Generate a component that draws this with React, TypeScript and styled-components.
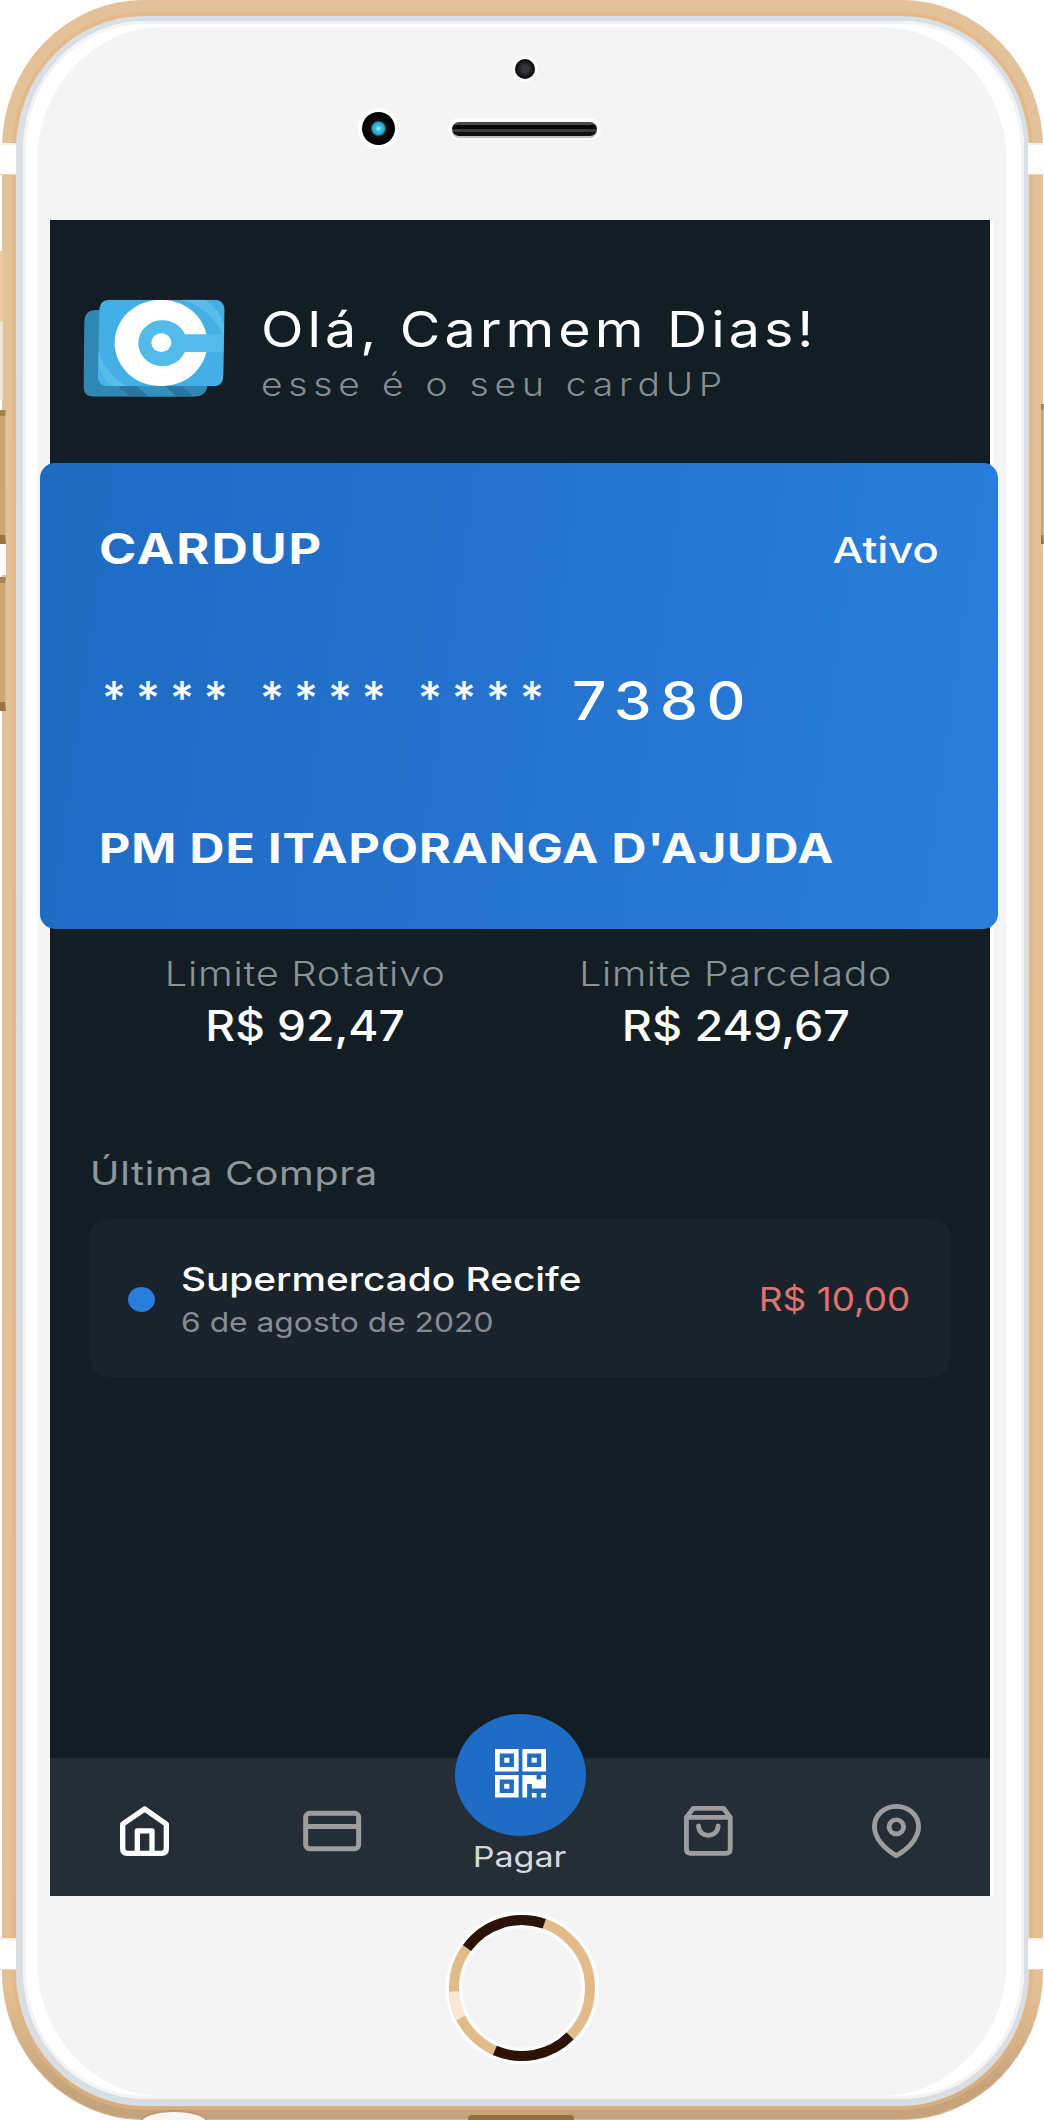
import React from "react";
import styled, { createGlobalStyle } from "styled-components";

const GlobalStyle = createGlobalStyle`
  * { box-sizing: border-box; }
  body { margin: 0; background: #fff; }
`;

/* ---------- phone body ---------- */

const Phone = styled.div`
  position: relative;
  width: 1044px;
  height: 2120px;
  padding: 0 1px 0 2px;
  overflow: hidden;
  font-family: Inter, "Open Sans", "Liberation Sans", sans-serif;
`;

const GoldFrame = styled.div`
  height: 2120px;
  padding: 16px 14px 14px;
  border-radius: 142px / 148px;
  background: linear-gradient(180deg, #e3c29a 0, #e3bf94 1990px, #c5a37b 2090px);
  box-shadow: inset 0 0 0 1px rgba(226, 196, 158, 0.6);
`;

const Rim = styled.div`
  height: 2090px;
  padding: 5px 5px 7px 7px;
  border-radius: 128px / 134px;
  background: linear-gradient(180deg, #d8e0e7, #dadfe1 50%, #d9dee2);
  box-shadow: 0 0 0 4px rgba(229, 180, 130, 0.6);
`;

const Gloss = styled.div`
  height: 2078px;
  padding: 6px 17px 3px 14px;
  border-radius: 122px / 128px;
  background: #fff;
  box-shadow: inset 0 0 0 3px #f3f3f4;
`;

const Plate = styled.div`
  display: flex;
  flex-direction: column;
  height: 2069px;
  padding-left: 13px;
  border-radius: 126px / 136px;
  background: #f4f4f4;
`;

const AntennaGap = styled.div<{ $side: "left" | "right"; $top: number }>`
  position: absolute;
  ${(p) => p.$side}: 0;
  top: ${(p) => p.$top}px;
  width: 16px;
  height: 32px;
  background: #fff;
  border-top: 2px solid #faeee2;
  border-bottom: 1px solid #efd2b0;
`;

const SideKey = styled.div<{ $side: "left" | "right"; $top: number; $height: number; $width: number }>`
  position: absolute;
  ${(p) => p.$side}: 0;
  top: ${(p) => p.$top}px;
  width: ${(p) => p.$width}px;
  height: ${(p) => p.$height}px;
  background: #cba673;
  border-top: 6px solid #a8824f;
  border-bottom: 9px solid #9a7443;
  border-right: 1px solid #d8b98f;
`;

const KeyGap = styled.div<{ $top: number; $height: number; $width: number; $tone: string }>`
  position: absolute;
  left: 0;
  top: ${(p) => p.$top}px;
  width: ${(p) => p.$width}px;
  height: ${(p) => p.$height}px;
  background: ${(p) => p.$tone};
`;

const Jack = styled.div`
  position: absolute;
  left: 142px;
  top: 2112px;
  width: 64px;
  height: 20px;
  border-radius: 50%;
  background: #f7f7f7;
  box-shadow: 0 0 0 2px #c19565;
`;

const Port = styled.div`
  position: absolute;
  left: 468px;
  top: 2115px;
  width: 106px;
  height: 6px;
  border-radius: 4px 4px 0 0;
  background: #94703f;
`;

/* ---------- bezel ---------- */

const TopBezel = styled.div`
  height: 193px;
  flex: none;
  padding: 32px 0 0 312px;
`;

const Sensor = styled.div`
  width: 20px;
  height: 20px;
  margin-left: 153px;
  border-radius: 50%;
  background: radial-gradient(#34343a 25%, #0c0c0f 65%);
  box-shadow: 0 0 0 3px #fcfcfc;
`;

const SpeakerRow = styled.div`
  display: flex;
  align-items: center;
  margin-top: 33px;
`;

const Camera = styled.div`
  width: 33px;
  height: 33px;
  margin-right: 57px;
  border-radius: 50%;
  background: radial-gradient(circle, #b8f2ff 0, #2fc2e6 3px, #27a5cc 6px, #180c0c 8px, #000 15px);
  box-shadow: 0 0 0 4px #fdfdfd;
`;

const Speaker = styled.div`
  width: 145px;
  height: 14px;
  border-radius: 7px;
  background: linear-gradient(180deg, #4a4a4a 0 3px, #080808 3px 7px, #3b3b3b 7px 10px, #111 10px);
  box-shadow: 0 2px 0 #c2c0c0, 0 0 0 4px #fdfdfd;
`;

const HomeButton = styled.svg`
  display: block;
  width: 160px;
  height: 160px;
  margin: 12px 0 0 392px;
`;

/* ---------- screen ---------- */

const Screen = styled.main`
  display: flex;
  flex-direction: column;
  flex: none;
  width: 940px;
  height: 1676px;
  background: #131e24;
  box-shadow: 3px 0 0 #fff;
`;

const Label = styled.span<{
  $size: number;
  $line: number;
  $weight?: number;
  $tone?: string;
  $spacing?: number;
  $stretch?: number;
  $origin?: string;
}>`
  display: block;
  white-space: pre;
  font-size: ${(p) => p.$size}px;
  line-height: ${(p) => p.$line}px;
  font-weight: ${(p) => p.$weight ?? 400};
  color: ${(p) => p.$tone ?? "#fff"};
  letter-spacing: ${(p) => p.$spacing ?? 0}px;
  transform: scaleX(${(p) => p.$stretch ?? 1});
  transform-origin: ${(p) => p.$origin ?? "left"} center;
`;

const Header = styled.header`
  display: flex;
  height: 243px;
  padding: 79px 0 0 33px;
`;

const Logo = styled.svg`
  flex: none;
  width: 142px;
  height: 98px;
  margin-right: 36px;
`;

const Greeting = styled.div`
  padding-top: 3px;
`;

const BankCard = styled.section`
  display: flex;
  flex-direction: column;
  flex: none;
  height: 466px;
  margin: 0 -8px 0 -10px;
  padding: 56px 59px 50px;
  border-radius: 15px;
  background: linear-gradient(98deg, #1e6bc2, #2473cf 50%, #2a7fdc);
`;

const CardTop = styled.div`
  display: flex;
  justify-content: space-between;
`;

const CardNumber = styled.div`
  display: flex;
  margin: 82px 0 79px 3px;
`;

const Mask = styled.div`
  width: 470px;
  padding-top: 5px;
`;

const Limits = styled.section`
  display: grid;
  grid-template-columns: 1fr 1fr;
  height: 219px;
  padding: 21px 39px 0 40px;
  flex: none;
`;

const Limit = styled.div`
  display: flex;
  flex-direction: column;
  align-items: center;
`;

const LastPurchase = styled.section`
  flex: 1;
  padding: 0 39px;
`;

const SectionTitle = styled.div`
  padding-left: 1px;
`;

const Tile = styled.article`
  display: flex;
  align-items: center;
  height: 158px;
  margin-top: 21px;
  padding: 3px 41px 0 39px;
  border-radius: 20px;
  background: #1a222b;
`;

const Dot = styled.i`
  width: 27px;
  height: 25px;
  margin-right: 26px;
  border-radius: 50%;
  background: #2a7edb;
`;

const Details = styled.div`
  flex: 1;
  padding-top: 3px;
`;

const TabBar = styled.nav`
  display: grid;
  grid-template-columns: repeat(5, 1fr);
  flex: none;
  height: 138px;
  background: #252e37;
`;

const Tab = styled.a`
  display: flex;
  align-items: center;
  justify-content: center;
  padding-top: 8px;
`;

const PayTab = styled.a`
  display: flex;
  flex-direction: column;
  align-items: center;
`;

const PayCircle = styled.div`
  display: flex;
  align-items: center;
  justify-content: center;
  width: 131px;
  height: 122px;
  margin-top: -44px;
  padding-bottom: 4px;
  border-radius: 50%;
  background: #1f6cc4;
`;

const Icon = styled.svg<{ $w: number; $h: number }>`
  display: block;
  width: ${(p) => p.$w}px;
  height: ${(p) => p.$h}px;
  overflow: visible;
  fill: none;
  stroke-linecap: round;
  stroke-linejoin: round;
`;

const LogoMark = () => (
  <Logo viewBox="130 266 426 294" preserveAspectRatio="none">
    <defs>
      <clipPath id="front">
        <path d="M212 268H522Q555 268 555 302L551 496Q551 528 518 528H208Q175 528 175 494L179 302Q179 268 212 268Z" />
      </clipPath>
      <clipPath id="back">
        <path d="M168 299H470Q504 299 504 334V526Q498 559 464 559H164Q131 559 131 526L134 334Q136 299 168 299Z" />
      </clipPath>
    </defs>
    <g clipPath="url(#back)">
      <rect x="131" y="299" width="380" height="262" fill="#3187b3" />
      <path d="M225 520H283L328 560H275ZM370 520H420L462 560H410Z" fill="#2b749d" />
      <path d="M283 520H370L410 560H328Z" fill="#3290bd" />
    </g>
    <g clipPath="url(#front)">
      <rect x="170" y="260" width="390" height="275" fill="#44afe5" />
      <path d="M176 422Q196 488 263 530H225Q176 515 176 460Z" fill="#58bdea" />
      <path d="M176 460Q185 510 225 530H170Z" fill="#47b2e7" />
      <path d="M420 266Q515 292 553 380V340Q538 294 491 266Z" fill="#58bdea" />
      <ellipse cx="364" cy="398" rx="139" ry="130" fill="#fff" />
      <path d="M551 372H436A73 69 0 1 0 436 425H551Z" fill="#54bae9" />
      <ellipse cx="365" cy="397" rx="30" ry="28" fill="#fff" />
    </g>
  </Logo>
);

const HomeIcon = () => (
  <Icon $w={49} $h={50} viewBox="238 348 147 149" preserveAspectRatio="none" stroke="#fff" strokeWidth="16">
    <path d="M312 357L246 402V475Q246 489 260 489H363Q377 489 377 475V402Z" />
    <path d="M290 489V422H334V489" />
  </Icon>
);

const WalletIcon = () => (
  <Icon $w={58} $h={40} viewBox="789 362 174 121" preserveAspectRatio="none" stroke="#9d9d9d" strokeWidth="15">
    <rect x="797" y="369" width="159" height="107" rx="12" />
    <path d="M797 409H956" />
  </Icon>
);

const BagIcon = () => (
  <Icon $w={49} $h={50} viewBox="529 349 142 149" preserveAspectRatio="none" stroke="#9d9d9d" strokeWidth="14">
    <path d="M556 356H644L663 383V478Q663 490 651 490H548Q536 490 536 478V383Z" />
    <path d="M537 383H662" />
    <path d="M571 408C572 446 627 446 628 408" />
  </Icon>
);

const PinIcon = () => (
  <Icon $w={49} $h={54} viewBox="1071 342 141 161" preserveAspectRatio="none" stroke="#9d9d9d" strokeWidth="14">
    <path d="M1141 349C1106 349 1078 376 1078 410C1078 443 1106 475 1141 496C1177 475 1205 443 1205 410C1205 376 1177 349 1141 349Z" />
    <ellipse cx="1141" cy="410" rx="21" ry="21" />
  </Icon>
);

const finders = [
  [0, 0],
  [5.8, 0],
  [0, 5.8],
];

const QrIcon = () => (
  <Icon $w={51} $h={48.5} viewBox="0 0 10.8 10.8" preserveAspectRatio="none">
    {finders.map(([x, y]) => (
      <g key={`${x}-${y}`}>
        <path
          fill="#fff"
          fillRule="evenodd"
          d={`M${x} ${y}h5v5h-5zM${x + 1} ${y + 1}v3h3v-3z`}
        />
        <rect x={x + 1.95} y={y + 1.95} width="1.1" height="1.1" fill="#fff" />
      </g>
    ))}
    <path
      fill="#fff"
      d="M5.8 5.8h3v1h1v-1h1v3h-3v-1h-1v3h-1zM7.8 9.8h1v1h-1zM9.8 9.8h1v1h-1z"
    />
  </Icon>
);

const ringArcs = [
  { from: -144, to: -71, color: "#2c1207" },
  { from: 45, to: 113.5, color: "#2c1207" },
  { from: 154, to: 177, color: "#fbe7d4" },
];

const HomeRing = () => (
  <HomeButton viewBox="-80 -80 160 160" fill="none">
    <circle r="68" stroke="#fbfdfe" strokeWidth="17" />
    <circle r="68" stroke="#e2bb8a" strokeWidth="10" />
    {ringArcs.map((a) => (
      <circle
        key={a.from}
        r="68"
        pathLength="360"
        stroke={a.color}
        strokeWidth="10"
        strokeDasharray={`${a.to - a.from} 360`}
        transform={`rotate(${a.from})`}
      />
    ))}
  </HomeButton>
);

export default function App() {
  return (
    <Phone>
      <GlobalStyle />
      <GoldFrame>
        <Rim>
          <Gloss>
            <Plate>
              <TopBezel>
                <Sensor />
                <SpeakerRow>
                  <Camera />
                  <Speaker />
                </SpeakerRow>
              </TopBezel>
              <Screen>
                <Header>
                  <LogoMark />
                  <Greeting>
                    <Label $size={49} $line={56} $spacing={3.5} $stretch={1.136}>Olá, Carmem Dias!</Label>
                    <Label $size={32} $line={54} $weight={300} $spacing={5} $stretch={1.161} $tone="#858d94">
                      esse é o seu cardUP
                    </Label>
                  </Greeting>
                </Header>
                <BankCard>
                  <CardTop>
                    <Label $size={42} $line={60} $weight={700} $spacing={1.6} $stretch={1.2}>CARDUP</Label>
                    <Label $size={36} $line={62} $weight={500} $stretch={1.21} $origin="right">Ativo</Label>
                  </CardTop>
                  <CardNumber>
                    <Mask>
                      <Label $size={46} $line={60} $weight={500} $spacing={10}>**** **** ****</Label>
                    </Mask>
                    <Label $size={53} $line={76} $weight={500} $spacing={7.3} $stretch={1.14}>7380</Label>
                  </CardNumber>
                  <Label $size={41} $line={60} $weight={700} $spacing={0.77} $stretch={1.18}>PM DE ITAPORANGA D'AJUDA</Label>
                </BankCard>
                <Limits>
                  <Limit>
                    <Label $size={33.5} $line={48} $weight={300} $spacing={0.6} $stretch={1.188} $origin="center" $tone="#8b9298">Limite Rotativo</Label>
                    <Label $size={42} $line={55} $weight={500} $stretch={1.095} $origin="center">R$ 92,47</Label>
                  </Limit>
                  <Limit>
                    <Label $size={33.5} $line={48} $weight={300} $spacing={0.6} $stretch={1.17} $origin="center" $tone="#8b9298">Limite Parcelado</Label>
                    <Label $size={42} $line={55} $weight={500} $stretch={1.109} $origin="center">R$ 249,67</Label>
                  </Limit>
                </Limits>
                <LastPurchase>
                  <SectionTitle>
                    <Label $size={33} $line={50} $spacing={0.6} $stretch={1.198} $tone="#8f969c">Última Compra</Label>
                  </SectionTitle>
                  <Tile>
                    <Dot />
                    <Details>
                      <Label $size={33} $line={43} $weight={500} $stretch={1.175}>Supermercado Recife</Label>
                      <Label $size={27.5} $line={43} $stretch={1.155} $tone="#868c93">6 de agosto de 2020</Label>
                    </Details>
                    <Label $size={33} $line={43} $stretch={1.12} $origin="right" $tone="#dc746e">R$ 10,00</Label>
                  </Tile>
                </LastPurchase>
                <TabBar>
                  <Tab><HomeIcon /></Tab>
                  <Tab><WalletIcon /></Tab>
                  <PayTab>
                    <PayCircle><QrIcon /></PayCircle>
                    <Label $size={28} $line={42} $stretch={1.217} $origin="center" $tone="#d6d8da">Pagar</Label>
                  </PayTab>
                  <Tab><BagIcon /></Tab>
                  <Tab><PinIcon /></Tab>
                </TabBar>
              </Screen>
              <HomeRing />
            </Plate>
          </Gloss>
        </Rim>
      </GoldFrame>
      <AntennaGap $side="left" $top={143} />
      <AntennaGap $side="right" $top={143} />
      <AntennaGap $side="left" $top={1938} />
      <AntennaGap $side="right" $top={1938} />
      <KeyGap $top={251} $height={71} $width={3} $tone="#eccb9f" />
      <KeyGap $top={322} $height={78} $width={3} $tone="#f1e4d4" />
      <SideKey $side="left" $top={410} $height={134} $width={6} />
      <KeyGap $top={544} $height={31} $width={6} $tone="#fff" />
      <SideKey $side="left" $top={577} $height={134} $width={6} />
      <SideKey $side="right" $top={404} $height={140} $width={3} />
      <Jack />
      <Port />
    </Phone>
  );
}
